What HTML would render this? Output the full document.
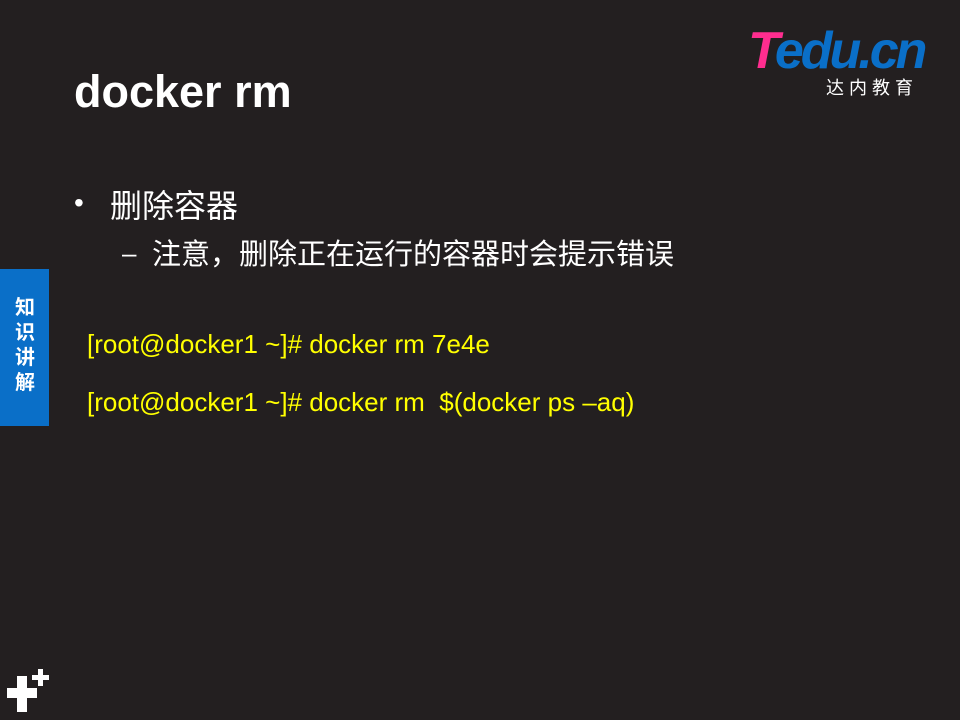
<!DOCTYPE html>
<html><head><meta charset="utf-8"><style>
body{margin:0;width:960px;height:720px;background:#231f20;position:relative;overflow:hidden;font-family:"Liberation Sans","Noto Sans CJK SC",sans-serif;}
.t{position:absolute;white-space:nowrap;}
</style></head><body>
<div class="t" style="left:74px;top:66px;font-size:45px;font-weight:bold;color:#fff;">docker rm</div>
<div class="t" style="left:748px;top:26px;font-size:52px;font-weight:bold;font-style:italic;letter-spacing:-3px;line-height:50px;"><span style="color:#ff2d8f">T</span><span style="color:#0a6fc8">edu.cn</span></div>
<div class="t" style="left:826px;top:74px;font-size:18px;color:#fff;letter-spacing:5px;">达内教育</div>
<div class="t" style="left:74px;top:187px;font-size:28px;color:#fff;">•</div>
<div class="t" style="left:110px;top:181px;font-size:32px;color:#fff;">删除容器</div>
<div class="t" style="left:122px;top:238px;font-size:26px;color:#fff;">–</div>
<div class="t" style="left:152px;top:231px;font-size:29px;color:#fff;">注意，删除正在运行的容器时会提示错误</div>
<div class="t" style="left:87px;top:329px;font-size:26px;color:#ffff00;">[root@docker1 ~]# docker rm 7e4e</div>
<div class="t" style="left:87px;top:387px;font-size:26px;color:#ffff00;">[root@docker1 ~]# docker rm &nbsp;$(docker ps –aq)</div>
<div style="position:absolute;left:0;top:269px;width:49px;height:157px;background:#0a6fc8;"></div>
<div class="t" style="left:13px;top:296px;width:24px;font-size:20px;font-weight:bold;color:#fff;line-height:25px;white-space:normal;text-align:center;">知识讲解</div>
<div style="position:absolute;left:7px;top:688px;width:30px;height:10px;background:#fff"></div>
<div style="position:absolute;left:17px;top:676px;width:10px;height:36px;background:#fff"></div>
<div style="position:absolute;left:32px;top:675px;width:17px;height:5px;background:#fff"></div>
<div style="position:absolute;left:38px;top:669px;width:5px;height:17px;background:#fff"></div>
</body></html>
